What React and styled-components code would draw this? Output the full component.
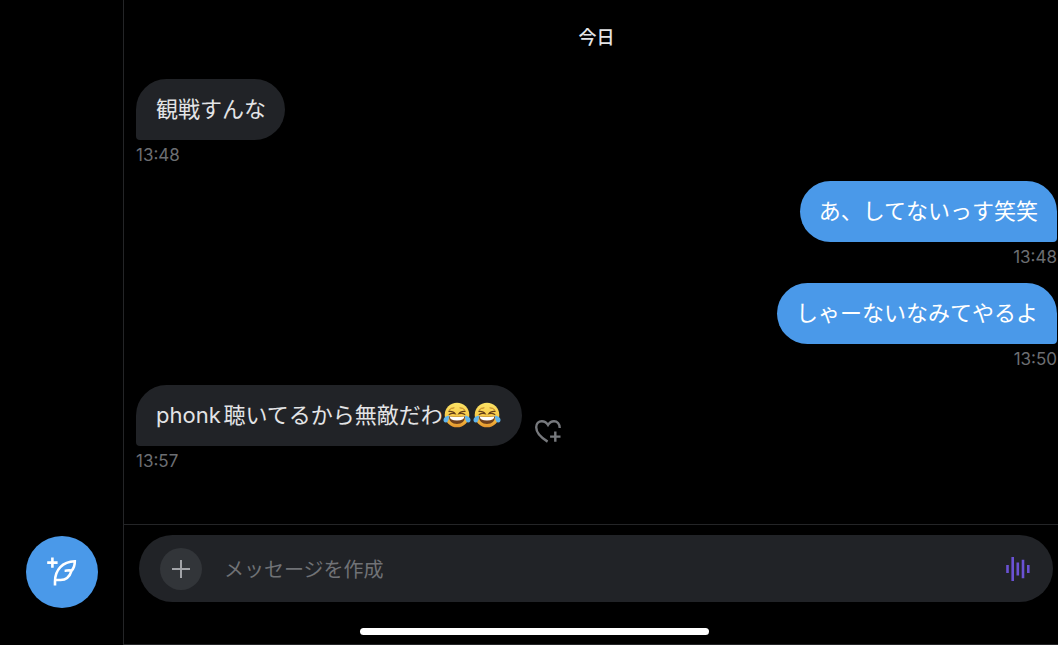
import React from "react";
import styled, { createGlobalStyle, css } from "styled-components";

const GlobalStyle = createGlobalStyle`
  *, *::before, *::after { box-sizing: border-box; }
  body {
    margin: 0;
    background: #000;
    color: #e3e4e6;
    font-family: Inter, "Noto Sans CJK JP", sans-serif;
  }
  button { border: 0; padding: 0; cursor: pointer; font: inherit; }
`;

const Page = styled.div`
  position: relative;
  display: grid;
  grid-template-columns: 124px 1fr;
  min-height: 100vh;
`;

const Sidebar = styled.nav`
  display: flex;
  flex-direction: column;
  justify-content: flex-end;
  align-items: flex-end;
  padding: 0 25px 37px 0;
  border-right: 1px solid #242527;
`;

const ComposeButton = styled.button`
  display: grid;
  place-items: center;
  width: 72px;
  height: 72px;
  border-radius: 50%;
  background: #4a99e9;
  color: #fff;
`;

const Conversation = styled.main`
  display: flex;
  flex-direction: column;
  min-width: 0;
  border-bottom: 1px solid #242527;
`;

const Messages = styled.section`
  flex: 1;
  padding: 26px 1px 0 12px;
`;

const DayHeading = styled.h2`
  margin: 0 0 29px;
  font-size: 18px;
  line-height: 24px;
  font-weight: 500;
  text-align: center;
`;

const MessageList = styled.ol`
  display: flex;
  flex-direction: column;
  gap: 16px;
  margin: 0;
  padding: 0;
  list-style: none;
`;

const Message = styled.li`
  display: flex;
  flex-direction: column;
  align-items: ${({ $own }) => ($own ? "flex-end" : "flex-start")};
`;

const BubbleRow = styled.div`
  display: flex;
  align-items: flex-end;
  gap: 12px;
`;

const Bubble = styled.p`
  display: flex;
  align-items: center;
  margin: 0;
  height: 61px;
  font-size: 22px;
  line-height: 32px;
  white-space: nowrap;
  text-autospace: normal;
  ${({ $own }) =>
    $own
      ? css`
          padding: 0 19px 2px;
          background: #4a99e9;
          color: #fff;
          border-radius: 31px 31px 4px 31px;
        `
      : css`
          padding: 0 19px 2px 20px;
          background: #212327;
          border-radius: 31px 31px 31px 4px;
        `}
`;

const Time = styled.time`
  margin-top: 5px;
  font-size: 17px;
  line-height: 20px;
  color: #6c6e72;
`;

const Emoji = styled.svg`
  width: 28px;
  height: 26px;
  margin-right: 2px;
`;

const ReactButton = styled.button`
  display: flex;
  background: none;
  color: #77797d;
  margin-bottom: 2px;
`;

const Footer = styled.footer`
  padding: 10px 5px 42px 15px;
  border-top: 1px solid #242527;
`;

const Composer = styled.form`
  display: flex;
  align-items: center;
  height: 67px;
  padding: 0 23px 0 21px;
  border-radius: 34px;
  background: #212327;
`;

const AddButton = styled.button`
  display: grid;
  place-items: center;
  flex: none;
  width: 42px;
  height: 42px;
  border-radius: 50%;
  background: #323539;
  color: #a2a4a8;
`;

const MessageInput = styled.input`
  flex: 1;
  min-width: 0;
  margin: 0 22px;
  padding: 2px 0 0;
  border: 0;
  outline: 0;
  background: none;
  color: #e3e4e6;
  font: inherit;
  font-size: 20px;
  line-height: 30px;
  &::placeholder { color: #707276; opacity: 1; }
`;

const VoiceButton = styled.button`
  display: flex;
  background: none;
  color: #6a52d4;
`;

const HomeIndicator = styled.div`
  position: absolute;
  left: 34%;
  bottom: 10px;
  width: 33%;
  height: 7px;
  border-radius: 4px;
  background: #fff;
`;

const JoyEmoji = () => (
  <Emoji viewBox="0 0 28 26" role="img" aria-label="😂">
    <defs>
      <linearGradient id="face" x1="0" y1="0" x2="0" y2="1">
        <stop offset="0" stopColor="#fbe467" />
        <stop offset="0.6" stopColor="#f7c644" />
        <stop offset="1" stopColor="#e4942e" />
      </linearGradient>
    </defs>
    <circle cx="14" cy="13" r="12.3" fill="url(#face)" />
    <path d="M6 8.2Q8 5.6 11 5.8M22 8.2Q20 5.6 17 5.8" fill="none" stroke="#b97a22" strokeWidth="1" strokeLinecap="round" />
    <path d="M6 9.4Q10.5 9 12.2 11.8Q9 10.8 6.2 12.4M22 9.4Q17.5 9 15.8 11.8Q19 10.8 21.8 12.4" fill="none" stroke="#65401a" strokeWidth="1.2" strokeLinecap="round" />
    <path d="M5.8 14.2Q14 15.2 22.2 14.2Q21.6 22 14 22Q6.4 22 5.8 14.2Z" fill="#70401c" />
    <path d="M6.6 14.6Q14 15.6 21.4 14.6Q21.2 18.4 14 18.6Q6.8 18.4 6.6 14.6Z" fill="#fff" />
    <path d="M6.2 13.4Q1.6 14 .6 17Q0 20.4 2.8 20.6Q5.6 20.4 6.2 13.4ZM21.8 13.4Q26.4 14 27.4 17Q28 20.4 25.2 20.6Q22.4 20.4 21.8 13.4Z" fill="#5fb4ec" />
  </Emoji>
);

const QuillIcon = () => (
  <svg width="32" height="32" viewBox="0 0 32 32" fill="none" stroke="currentColor" strokeWidth="2.6" aria-hidden="true">
    <path d="M6.4 1.4v10.4M1.2 6.6h10.4" />
    <path d="M9 29.4V25.5C9 14 16.5 5.4 28.8 5.2C28.8 9.2 27.8 12.3 25.6 14.6M18.6 14.8C21 14.8 22 13.8 25.6 14.6C23.8 20.4 19.6 24 14.5 24H9.4" />
  </svg>
);

const HeartPlusIcon = () => (
  <svg width="28" height="25" viewBox="0 0 28 25" fill="none" stroke="currentColor" strokeWidth="2.4" aria-hidden="true">
    <path d="M13.6 22.6C6.5 18.3 2.2 13.4 2.2 8.3C2.2 4.7 4.6 2.2 7.8 2.2C10.5 2.2 12.5 3.5 14 6C15.5 3.5 17.5 2.2 20 2.2C23.2 2.2 25.7 4.7 25.7 9" />
    <path d="M21.3 12.4v10.4M16.1 17.6h10.4" />
  </svg>
);

const PlusIcon = () => (
  <svg width="18" height="18" viewBox="0 0 18 18" fill="none" stroke="currentColor" strokeWidth="2" aria-hidden="true">
    <path d="M9 0v18M0 9h18" />
  </svg>
);

const WaveIcon = () => (
  <svg width="24" height="24" viewBox="0 0 24 24" fill="none" stroke="currentColor" strokeWidth="2.6" aria-hidden="true">
    <path d="M1.5 8v8M6.7 0v24M11.8 5.5v13M17 2.7v18.6M22.3 8v8" />
  </svg>
);

const messages = [
  { text: "観戦すんな", time: "13:48" },
  { text: "あ、してないっす笑笑", time: "13:48", own: true },
  { text: "しゃーないなみてやるよ", time: "13:50", own: true },
  { text: "phonk聴いてるから無敵だわ", time: "13:57", joy: 2, reactable: true },
];

export default function App() {
  return (
    <>
      <GlobalStyle />
      <Page lang="ja">
        <Sidebar>
          <ComposeButton type="button" aria-label="ポストを作成">
            <QuillIcon />
          </ComposeButton>
        </Sidebar>
        <Conversation>
          <Messages>
            <DayHeading>今日</DayHeading>
            <MessageList>
              {messages.map((m) => (
                <Message key={m.text} $own={m.own}>
                  <BubbleRow>
                    <Bubble $own={m.own}>
                      {m.text}
                      {Array.from({ length: m.joy || 0 }, (_, i) => (
                        <JoyEmoji key={i} />
                      ))}
                    </Bubble>
                    {m.reactable && (
                      <ReactButton type="button" aria-label="リアクション">
                        <HeartPlusIcon />
                      </ReactButton>
                    )}
                  </BubbleRow>
                  <Time>{m.time}</Time>
                </Message>
              ))}
            </MessageList>
          </Messages>
          <Footer>
            <Composer onSubmit={(e) => e.preventDefault()}>
              <AddButton type="button" aria-label="追加">
                <PlusIcon />
              </AddButton>
              <MessageInput type="text" aria-label="メッセージを作成" placeholder="メッセージを作成" />
              <VoiceButton type="button" aria-label="音声メッセージ">
                <WaveIcon />
              </VoiceButton>
            </Composer>
          </Footer>
        </Conversation>
        <HomeIndicator />
      </Page>
    </>
  );
}
